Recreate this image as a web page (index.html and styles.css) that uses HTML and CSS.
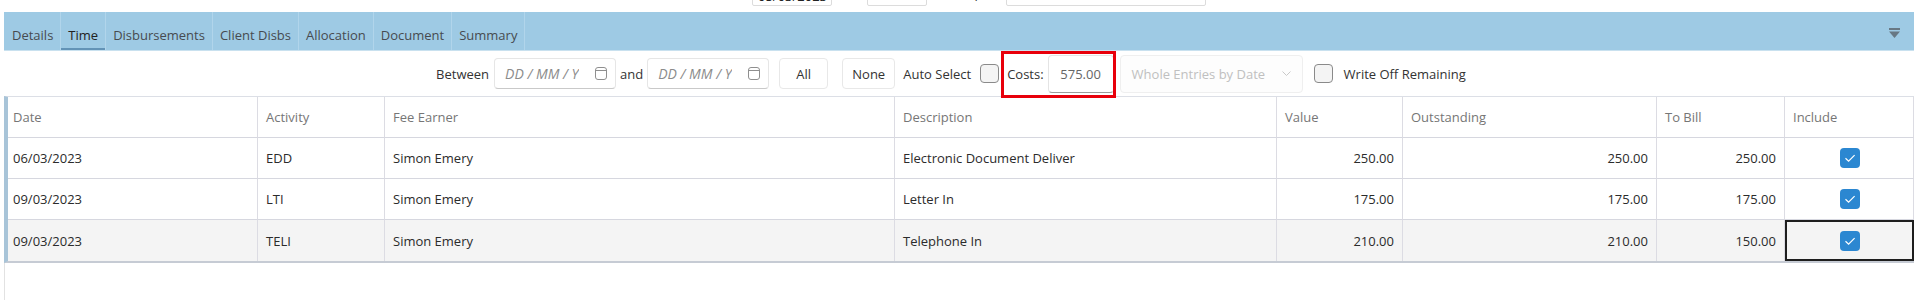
FILE: index.html
```html
<!DOCTYPE html>
<html lang="en">
<head>
    <meta charset="UTF-8">
    <meta name="viewport" content="width=device-width, initial-scale=1.0">
    <title>Bill - Time</title>
    <link rel="stylesheet" href="styles.css">
</head>
<body>
    <div class="top-strip">
        <div class="top-field date-field">05/03/2023</div>
        <div class="top-field small-field"></div>
        <span class="top-label">Up</span>
        <div class="top-field wide-field"></div>
    </div>

    <div class="tab-bar">
        <div class="tabs">
            <span class="tab first">Details</span>
            <span class="tab active">Time</span>
            <span class="tab">Disbursements</span>
            <span class="tab">Client Disbs</span>
            <span class="tab">Allocation</span>
            <span class="tab">Document</span>
            <span class="tab last">Summary</span>
        </div>
        <svg class="collapse-icon" width="11" height="10" viewBox="0 0 11 10">
            <rect x="0" y="0" width="11" height="2" fill="#687884"/>
            <path d="M0 3.5 H11 L5.5 10 Z" fill="#687884"/>
        </svg>
    </div>

    <div class="filters">
        <span class="label between">Between</span>
        <div class="date-input">
            <span class="placeholder">DD / MM / YYYY</span>
            <svg width="12" height="13" viewBox="0 0 12 13">
                <rect x="0.5" y="0.5" width="11" height="12" rx="2.5" fill="none" stroke="#8f8f8f"/>
                <line x1="1" y1="3.5" x2="11" y2="3.5" stroke="#8f8f8f"/>
            </svg>
        </div>
        <span class="label and">and</span>
        <div class="date-input second">
            <span class="placeholder">DD / MM / YYYY</span>
            <svg width="12" height="13" viewBox="0 0 12 13">
                <rect x="0.5" y="0.5" width="11" height="12" rx="2.5" fill="none" stroke="#8f8f8f"/>
                <line x1="1" y1="3.5" x2="11" y2="3.5" stroke="#8f8f8f"/>
            </svg>
        </div>
        <button class="btn btn-all">All</button>
        <button class="btn btn-none">None</button>
        <span class="label auto">Auto Select</span>
        <span class="check auto-check"></span>
        <div class="costs">
            <span class="label">Costs:</span>
            <span class="costs-input">575.00</span>
        </div>
        <div class="select">
            <span>Whole Entries by Date</span>
            <svg width="9" height="5" viewBox="0 0 9 5">
                <path d="M0.5 0.5 L4.5 4.5 L8.5 0.5" fill="none" stroke="#c9c9c9"/>
            </svg>
        </div>
        <span class="check write-check"></span>
        <span class="label">Write Off Remaining</span>
    </div>

    <div class="grid">
        <div class="cell head">Date</div>
        <div class="cell head">Activity</div>
        <div class="cell head">Fee Earner</div>
        <div class="cell head">Description</div>
        <div class="cell head">Value</div>
        <div class="cell head">Outstanding</div>
        <div class="cell head">To Bill</div>
        <div class="cell head">Include</div>

        <div class="cell">06/03/2023</div>
        <div class="cell">EDD</div>
        <div class="cell">Simon Emery</div>
        <div class="cell">Electronic Document Deliver</div>
        <div class="cell num">250.00</div>
        <div class="cell num">250.00</div>
        <div class="cell num">250.00</div>
        <div class="cell tick"><span class="checked"><svg width="20" height="20" viewBox="0 0 20 20"><path d="M5.5 10.2 L8.6 13.2 L14.6 7.2" fill="none" stroke="#fff" stroke-width="1.2"/></svg></span></div>

        <div class="cell">09/03/2023</div>
        <div class="cell">LTI</div>
        <div class="cell">Simon Emery</div>
        <div class="cell">Letter In</div>
        <div class="cell num">175.00</div>
        <div class="cell num">175.00</div>
        <div class="cell num">175.00</div>
        <div class="cell tick"><span class="checked"><svg width="20" height="20" viewBox="0 0 20 20"><path d="M5.5 10.2 L8.6 13.2 L14.6 7.2" fill="none" stroke="#fff" stroke-width="1.2"/></svg></span></div>

        <div class="cell sel last">09/03/2023</div>
        <div class="cell sel last">TELI</div>
        <div class="cell sel last">Simon Emery</div>
        <div class="cell sel last">Telephone In</div>
        <div class="cell sel last num">210.00</div>
        <div class="cell sel last num">210.00</div>
        <div class="cell sel last num">150.00</div>
        <div class="cell sel last tick focus"><span class="checked"><svg width="20" height="20" viewBox="0 0 20 20"><path d="M5.5 10.2 L8.6 13.2 L14.6 7.2" fill="none" stroke="#fff" stroke-width="1.2"/></svg></span></div>
    </div>
    <div class="grid-empty"></div>
</body>
</html>
```

FILE: styles.css
```css
body {
    margin: 0;
    font-family: 'Open Sans', 'Noto Sans', sans-serif;
    font-size: 13px;
    color: #333;
    background: #fff;
}

/* bit of the form above, cut off */
.top-strip {
    height: 12px;
    overflow: hidden;
    display: flex;
    align-items: flex-end;
    padding: 0 0 6px 752px;
    box-sizing: border-box;
}

.top-field {
    height: 24px;
    line-height: 18px;
    padding: 4px 5px 0;
    box-sizing: border-box;
    border: 1px solid #dcdcdc;
    border-radius: 2px;
    color: #222;
    flex-shrink: 0;
}

.date-field {
    width: 80px;
}

.small-field {
    width: 60px;
    margin-left: 35px;
}

.top-label {
    height: 24px;
    line-height: 18px;
    padding-top: 2px;
    box-sizing: border-box;
    margin-left: 38px;
    color: #333;
}

.wide-field {
    width: 200px;
    margin-left: 24px;
}

/* tabs */
.tab-bar {
    margin: 0 4px;
    height: 38px;
    background: #9ecae4;
    border-bottom: 1px solid #c9e1ef;
    display: flex;
    align-items: center;
    justify-content: space-between;
}

.tabs {
    display: flex;
    height: 100%;
}

.tab {
    display: flex;
    align-items: center;
    padding: 8px 7px 0;
    color: #474b50;
    border-left: 1px solid #b1d5eb;
}

.tab.first {
    border-left: none;
    padding-left: 8px;
}

.tab.last {
    border-right: 1px solid #b1d5eb;
}

.tab.active {
    color: #222;
    box-shadow: inset 0 -2px 0 #6393b6;
}

.collapse-icon {
    margin: 4px 14px 0 0;
}

/* filter row */
.filters {
    height: 45px;
    display: flex;
    align-items: center;
    justify-content: center;
    padding-right: 16px;
}

.label {
    white-space: nowrap;
    color: #333;
}

.between {
    margin-right: 5px;
}

.and {
    margin: 0 4px;
}

.date-input {
    width: 122px;
    height: 31px;
    box-sizing: border-box;
    border: 1px solid #e6e6e6;
    border-bottom-color: #c9c9c9;
    border-radius: 4px;
    padding: 0 8px 0 10px;
    display: flex;
    align-items: center;
    justify-content: space-between;
}

.date-input.second {
    margin-right: 10px;
}

.placeholder {
    width: 74px;
    overflow: hidden;
    white-space: nowrap;
    font-size: 14px;
    font-style: italic;
    color: #8c8c8c;
}

.btn {
    height: 31px;
    box-sizing: border-box;
    border: 1px solid #e8e8e8;
    border-radius: 4px;
    background: #fff;
    font-family: inherit;
    font-size: 13px;
    color: #333;
    padding: 0;
}

.btn-all {
    width: 49px;
    margin-right: 14px;
}

.btn-none {
    width: 53px;
    margin-right: 8px;
}

.check {
    width: 19px;
    height: 19px;
    box-sizing: border-box;
    border: 1px solid #8a8a8a;
    border-radius: 4px;
    background: #f4f4f4;
}

.auto {
    margin-right: 9px;
}

.auto-check {
    margin-right: 8px;
}

.costs {
    position: relative;
    display: flex;
    align-items: center;
    gap: 4px;
}

/* red highlight drawn over the costs box */
.costs::after {
    content: "";
    position: absolute;
    top: -4px;
    bottom: -5px;
    left: -6px;
    right: -2px;
    border: 3px solid #e8000b;
}

.costs-input {
    width: 66px;
    height: 38px;
    box-sizing: border-box;
    border: 1px solid #e4e4e4;
    border-bottom-color: #9c9c9c;
    border-radius: 4px;
    display: flex;
    align-items: center;
    justify-content: center;
    color: #666;
}

.select {
    width: 183px;
    height: 38px;
    box-sizing: border-box;
    margin: 0 11px 0 6px;
    border: 1px solid #efefef;
    border-radius: 4px;
    background: #fdfdfd;
    padding: 0 11px;
    display: flex;
    align-items: center;
    justify-content: space-between;
    color: #c0c0c0;
    white-space: nowrap;
}

.write-check {
    margin-right: 11px;
}

/* grid */
.grid {
    margin-left: 4px;
    width: 1910px;
    box-sizing: border-box;
    border-left: 4px solid #a8c4d8;
    border-top: 1px solid #dcdfe6;
    border-bottom: 2px solid #c6cbd4;
    display: grid;
    grid-template-columns: 250px 127px 510px 382px 126px 254px 128px 1fr;
}

.cell {
    height: 41px;
    box-sizing: border-box;
    padding: 0 8px;
    border-right: 1px solid #dcdce3;
    border-bottom: 1px solid #d6d7df;
    display: flex;
    align-items: center;
    color: #2b2b2b;
    white-space: nowrap;
}

.cell:nth-child(8n+1) {
    padding-left: 5px;
}

.cell.head {
    color: #767676;
}

.cell.num {
    justify-content: flex-end;
}

.cell.sel {
    background: #f4f4f4;
}

.cell.last {
    border-bottom: none;
}

.cell.tick {
    justify-content: center;
    padding-left: 10px;
}

.cell.focus {
    outline: 2px solid #1e1e1e;
    outline-offset: -2px;
}

.checked {
    width: 20px;
    height: 20px;
    border-radius: 4px;
    background: #2b87d1;
    display: flex;
}

.grid-empty {
    margin-left: 4px;
    height: 40px;
    border-left: 1px solid #e2e2e2;
}
```
